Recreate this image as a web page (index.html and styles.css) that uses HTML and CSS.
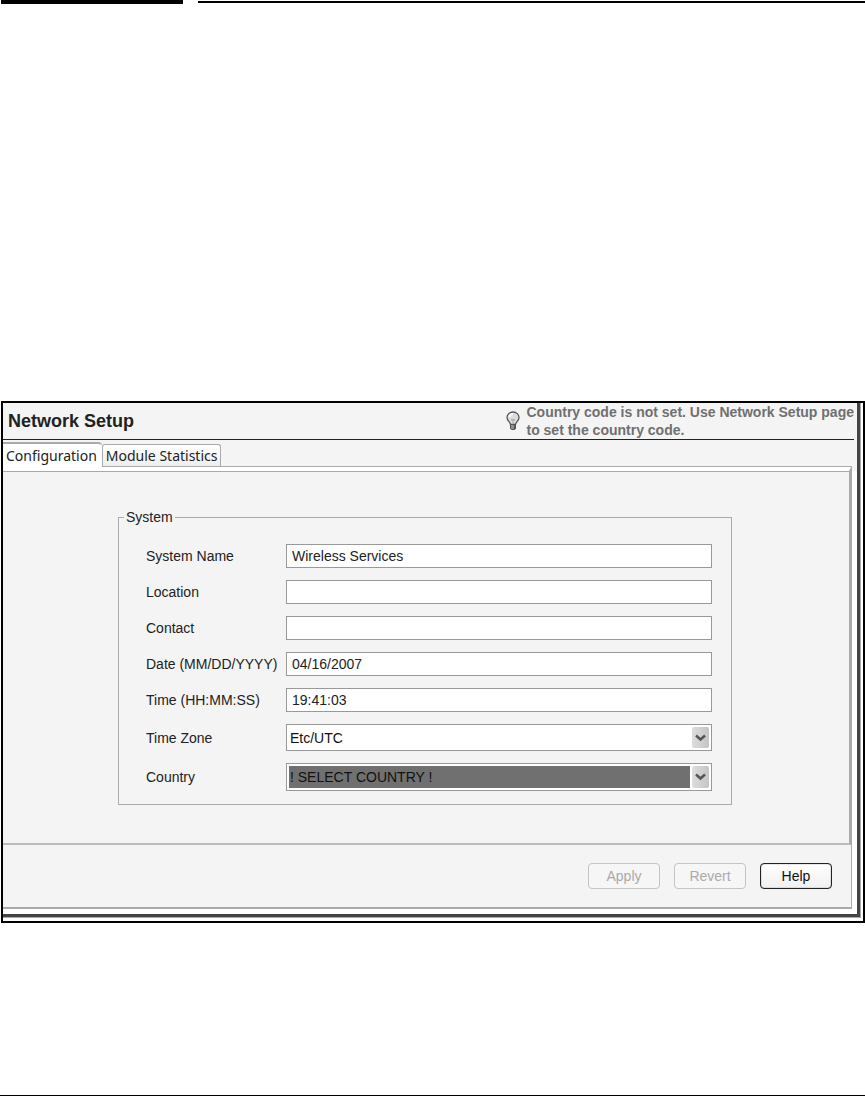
FILE: index.html
```
<!DOCTYPE html>
<html lang="en">
<head>
  <meta charset="UTF-8">
  <title>Network Setup</title>
  <link rel="stylesheet" href="styles.css">
</head>
<body>

<div class="page-rule">
  <span class="rule-thick"></span>
  <span class="rule-thin"></span>
</div>

<main class="frame">
  <div class="window">
    <header class="title-bar">
      <h1>Network Setup</h1>
      <div class="hint">
        <svg class="bulb" width="14" height="20" viewBox="0 0 14 20">
          <path d="M4.5 13.5C4.5 11 1 10 1 6.500a6 5.500 0 0 1 12 0C13 10 9.500 11 9.500 13.500z" fill="#ddd" stroke="#555" stroke-width="1.300"/>
          <path d="M5 8l1 1.500L7 8l1 1.500L9 8M7 9v4" fill="none" stroke="#aaa"/>
          <path d="M3.500 6Q4 3 7 3" fill="none" stroke="#fff" stroke-width="2"/>
          <path d="M4 13h6v4.500l-1.500 1.500h-3L4 17.500z" fill="#555"/>
          <path d="M5 15h3M5 17h3" stroke="#ccc"/>
        </svg>
        <p>Country code is not set. Use Network Setup page<br>to set the country code.</p>
      </div>
    </header>

    <nav class="tabs">
      <button type="button" class="tab active">Configuration</button>
      <button type="button" class="tab">Module Statistics</button>
    </nav>

    <form class="panel">
      <div class="panel-body">
        <fieldset class="system">
          <legend>System</legend>

          <label for="systemName">System Name</label>
          <input type="text" id="systemName" value="Wireless Services">

          <label for="location">Location</label>
          <input type="text" id="location">

          <label for="contact">Contact</label>
          <input type="text" id="contact">

          <label for="date">Date (MM/DD/YYYY)</label>
          <input type="text" id="date" value="04/16/2007">

          <label for="time">Time (HH:MM:SS)</label>
          <input type="text" id="time" value="19:41:03">

          <label for="timeZone">Time Zone</label>
          <div class="combo">
            <select id="timeZone">
              <option>Etc/UTC</option>
            </select>
            <span class="arrow"><svg width="11" height="8" viewBox="0 0 11 8"><path d="M1 1.500l4.500 4 4.500-4" fill="none" stroke="#555" stroke-width="2.500"/></svg></span>
          </div>

          <label for="country">Country</label>
          <div class="combo selected">
            <select id="country">
              <option>! SELECT COUNTRY !</option>
            </select>
            <span class="arrow"><svg width="11" height="8" viewBox="0 0 11 8"><path d="M1 1.500l4.500 4 4.500-4" fill="none" stroke="#555" stroke-width="2.500"/></svg></span>
          </div>
        </fieldset>
      </div>

      <div class="actions">
        <button type="button" disabled>Apply</button>
        <button type="button" disabled>Revert</button>
        <button type="button" class="help">Help</button>
      </div>
    </form>
  </div>
</main>

<footer class="page-footer"></footer>

</body>
</html>
```

FILE: styles.css
```
* {
  box-sizing: border-box;
}

body {
  margin: 0;
  min-height: 100vh;
  display: flex;
  flex-direction: column;
  background: #fff;
  color: #222;
  font-family: "Liberation Sans", Arial, sans-serif;
  font-size: 14px;
}

.page-rule {
  display: flex;
  gap: 15px;
  padding-left: 1px;
  margin-bottom: 397px;
}

.rule-thick {
  width: 182px;
  height: 4px;
  background: #000;
}

.rule-thin {
  flex: 1;
  height: 2px;
  margin-top: 1px;
  background: #000;
}

/* black frame with the window inside */
.frame {
  margin-left: 1px;
  border: 2px solid #000;
  padding: 0 3px 4px 0;
}

.window {
  border: solid #444;
  border-width: 0 3px 3px 0;
  outline: 1px solid #aaa;
  padding: 0 5px 5px 0;
  clip-path: inset(0 -1px -1px 0);
  background: linear-gradient(#f4f4f4, #f4f4f4) 0 0 / 100% 68px no-repeat #fff;
}

.title-bar {
  display: flex;
  justify-content: space-between;
  align-items: center;
  height: 37px;
  margin-right: -2px;
  padding-left: 5px;
  border-bottom: 1px solid #222;
}

.title-bar h1 {
  margin: 0;
  font-size: 18px;
}

.hint {
  display: flex;
  align-items: center;
  gap: 6px;
  color: #707070;
  font-weight: bold;
  line-height: 18px;
}

.hint p {
  margin: 0;
}

.tabs {
  display: flex;
  align-items: flex-end;
  height: 26px;
}

.tab {
  height: 22px;
  padding: 0 3px;
  border: 1px solid #aaa;
  border-bottom: none;
  border-radius: 3px 3px 0 0;
  background: linear-gradient(#fff, #eee);
  color: #222;
  font-family: "Noto Sans", sans-serif;
  font-size: 14px;
  line-height: 22px;
  white-space: nowrap;
}

/* one pixel taller than the row, so it joins the white strip below */
.tab.active {
  height: 25px;
  margin-bottom: -1px;
  padding: 0 5px 0 3px;
  border-top: 2px solid #aaa;
  border-left: none;
  border-right: none;
  border-radius: 0 4px 0 0;
  background: #fff;
  z-index: 1;
}

.panel {
  border: solid #aaa;
  border-width: 1px 1px 2px 0;
  background: #f4f4f4;
}

.panel-body {
  padding: 38px 117px 38px 115px;
  border-top: 4px solid #fff;
  border-right: 2px solid #aaa;
  border-bottom: 2px solid #bbb;
  box-shadow: inset 0 1px #aaa;
}

.system {
  display: grid;
  grid-template-columns: 128px 1fr;
  align-items: center;
  gap: 12px;
  margin: 0;
  padding: 19px 19px 13px 27px;
  border: 1px solid #aaa;
}

.system legend {
  margin-left: -22px;
  padding: 0 2px;
  line-height: 16px;
}

.system label {
  white-space: nowrap;
}

.system input {
  width: 100%;
  height: 24px;
  padding: 0 5px;
  border: 1px solid #999;
  background: #fff;
  color: #222;
  font: inherit;
}

.combo {
  display: flex;
  gap: 2px;
  height: 27px;
  padding: 2px;
  border: 1px solid #999;
  background: #fff;
}

.combo.selected {
  height: 28px;
}

.combo select {
  flex: 1;
  min-width: 0;
  appearance: none;
  padding: 0 1px;
  border: none;
  border-radius: 0;
  background: #fff;
  color: #111;
  font: inherit;
}

.combo.selected select {
  background: #707070;
}

.arrow {
  display: flex;
  align-items: center;
  justify-content: center;
  width: 17px;
  border-radius: 2px;
  background: linear-gradient(90deg, #ddd, #c4c4c4);
}

.actions {
  display: flex;
  justify-content: flex-end;
  gap: 14px;
  padding: 18px 19px;
}

.actions button {
  width: 72px;
  height: 26px;
  padding: 0;
  border: 1px solid #c4c4c4;
  border-radius: 4px;
  background: #f6f6f6;
  color: #aaa;
  font: inherit;
}

.actions .help {
  border-color: #222;
  background: linear-gradient(#fff, #f0f0f0);
  box-shadow: inset 0 0 1px #222;
  color: #111;
}

.page-footer {
  margin-top: auto;
  border-top: 1px solid #000;
}
```
